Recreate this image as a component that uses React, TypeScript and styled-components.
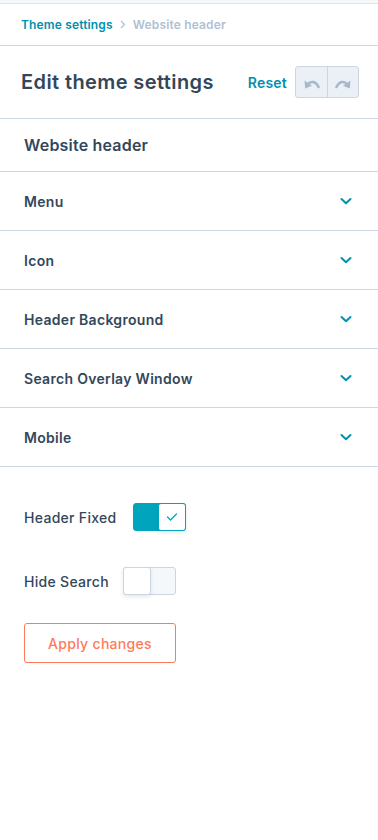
import React from "react";
import styled, { createGlobalStyle } from "styled-components";

const Global = createGlobalStyle`
  html, body { margin: 0; padding: 0; background: #fff; }
  body { font-family: "Inter", "Noto Sans", sans-serif; color: #33475b; }
  * { box-sizing: border-box; }
`;

const Panel = styled.div`
  width: 378px;
  min-height: 840px;
  background: #fff;
  display: flex;
  flex-direction: column;
`;

const TopStrip = styled.div`
  height: 4px;
  background: #f5f8fa;
  border-bottom: 1px solid #dfe3eb;
`;

const Breadcrumbs = styled.nav`
  height: 42px;
  display: flex;
  align-items: center;
  gap: 7px;
  padding: 0 21px;
  border-bottom: 1px solid #cbd6e2;
  font-size: 12px;
  font-weight: 600;
  letter-spacing: 0.15px;
`;

const Crumb = styled.span<{ $current?: boolean }>`
  color: ${(p) => (p.$current ? "#b0c1d4" : "#0091ae")};
`;

const Sep = styled.span`
  display: flex;
`;

const HeaderBar = styled.div`
  height: 73px;
  display: flex;
  align-items: center;
  padding: 0 19px 0 21px;
  border-bottom: 1px solid #cbd6e2;
`;

const Title = styled.h1`
  margin: 0;
  flex: 1;
  font-size: 20px;
  font-weight: 600;
  letter-spacing: 0.4px;
  color: #33475b;
`;

const ResetLink = styled.span`
  color: #0091ae;
  font-size: 14px;
  font-weight: 600;
  letter-spacing: 0.2px;
  margin-right: 8px;
`;

const BtnGroup = styled.div`
  display: flex;
  border: 1px solid #cbd6e2;
  border-radius: 3px;
  overflow: hidden;
  background: #eaf0f6;
`;

const IconBtn = styled.div<{ $divider?: boolean }>`
  width: 31px;
  height: 30px;
  display: flex;
  align-items: center;
  justify-content: center;
  padding-top: 3px;
  border-left: ${(p) => (p.$divider ? "1px solid #cbd6e2" : "none")};
`;

const SectionTitle = styled.div`
  height: 53px;
  display: flex;
  align-items: center;
  padding: 0 24px;
  font-size: 16px;
  font-weight: 600;
  letter-spacing: 0.2px;
  border-bottom: 1px solid #cbd6e2;
`;

const Row = styled.div`
  height: 59px;
  display: flex;
  align-items: center;
  justify-content: space-between;
  padding: 0 25px 0 24px;
  border-bottom: 1px solid #cbd6e2;
  font-size: 14px;
  font-weight: 600;
  letter-spacing: 0.3px;
`;

const Settings = styled.div`
  display: flex;
  flex-direction: column;
  padding: 36px 24px 0;
`;

const ToggleRow = styled.div<{ $gap: number; $mb: number }>`
  display: flex;
  align-items: center;
  gap: ${(p) => p.$gap}px;
  height: 28px;
  margin-bottom: ${(p) => p.$mb}px;
  font-size: 14px;
  font-weight: 500;
  letter-spacing: 0.3px;
`;

const Toggle = styled.div<{ $on?: boolean }>`
  width: 53px;
  height: 28px;
  border-radius: 3px;
  display: flex;
  justify-content: ${(p) => (p.$on ? "flex-end" : "flex-start")};
  background: ${(p) => (p.$on ? "#00a4bd" : "#f5f8fa")};
  border: 1px solid ${(p) => (p.$on ? "#00a4bd" : "#cbd6e2")};
`;

const Knob = styled.div<{ $on?: boolean }>`
  width: 28px;
  height: 28px;
  margin: -1px;
  border-radius: 3px;
  background: #fff;
  border: 1px solid ${(p) => (p.$on ? "#00a4bd" : "#cbd6e2")};
  box-shadow: 0 2px 4px rgba(45, 62, 80, 0.12);
  display: flex;
  align-items: center;
  justify-content: center;
`;

const ApplyButton = styled.button`
  width: 152px;
  height: 40px;
  border: 1px solid #ff7a59;
  border-radius: 3px;
  background: #fff;
  color: #ff7a59;
  font-family: inherit;
  font-size: 14px;
  font-weight: 500;
  letter-spacing: 0.3px;
  cursor: pointer;
`;

const Chevron = () => (
  <svg width="14" height="14" viewBox="0 0 14 14" fill="none">
    <path d="M2.5 5 L7 9.2 L11.5 5" stroke="#0091ae" strokeWidth="2" strokeLinecap="round" strokeLinejoin="round" />
  </svg>
);

const Undo = () => (
  <svg width="18" height="12" viewBox="0 0 18 12" fill="none">
    <path d="M4.5 6.5 C7.5 2.8 12.5 2.8 15.5 9" stroke="#a6b8cc" strokeWidth="2.6" strokeLinecap="round" fill="none" />
    <path d="M1.5 2.5 L2.2 10.5 L9 7.8 Z" fill="#a6b8cc" />
  </svg>
);

const Redo = () => (
  <svg width="18" height="12" viewBox="0 0 18 12" fill="none">
    <path d="M13.5 6.5 C10.5 2.8 5.5 2.8 2.5 9" stroke="#a6b8cc" strokeWidth="2.6" strokeLinecap="round" fill="none" />
    <path d="M16.5 2.5 L15.8 10.5 L9 7.8 Z" fill="#a6b8cc" />
  </svg>
);

const Check = () => (
  <svg width="12" height="10" viewBox="0 0 12 10" fill="none">
    <path d="M1.5 5 L4.5 8 L10.5 2" stroke="#00a4bd" strokeWidth="1.3" strokeLinecap="round" strokeLinejoin="round" />
  </svg>
);

const rows = ["Menu", "Icon", "Header Background", "Search Overlay Window", "Mobile"];

export default function App() {
  return (
    <>
      <Global />
      <Panel>
        <TopStrip />
        <Breadcrumbs>
          <Crumb>Theme settings</Crumb>
          <Sep>
            <svg width="6" height="9" viewBox="0 0 6 9"><path d="M1 1 L4.5 4.5 L1 8" stroke="#b0c1d4" strokeWidth="1.3" fill="none" /></svg>
          </Sep>
          <Crumb $current>Website header</Crumb>
        </Breadcrumbs>
        <HeaderBar>
          <Title>Edit theme settings</Title>
          <ResetLink>Reset</ResetLink>
          <BtnGroup>
            <IconBtn><Undo /></IconBtn>
            <IconBtn $divider><Redo /></IconBtn>
          </BtnGroup>
        </HeaderBar>
        <SectionTitle>Website header</SectionTitle>
        {rows.map((r) => (
          <Row key={r}>
            <span>{r}</span>
            <Chevron />
          </Row>
        ))}
        <Settings>
          <ToggleRow $gap={16} $mb={36}>
            <span>Header Fixed</span>
            <Toggle $on>
              <Knob $on><Check /></Knob>
            </Toggle>
          </ToggleRow>
          <ToggleRow $gap={14} $mb={28}>
            <span>Hide Search</span>
            <Toggle>
              <Knob />
            </Toggle>
          </ToggleRow>
          <ApplyButton>Apply changes</ApplyButton>
        </Settings>
      </Panel>
    </>
  );
}
